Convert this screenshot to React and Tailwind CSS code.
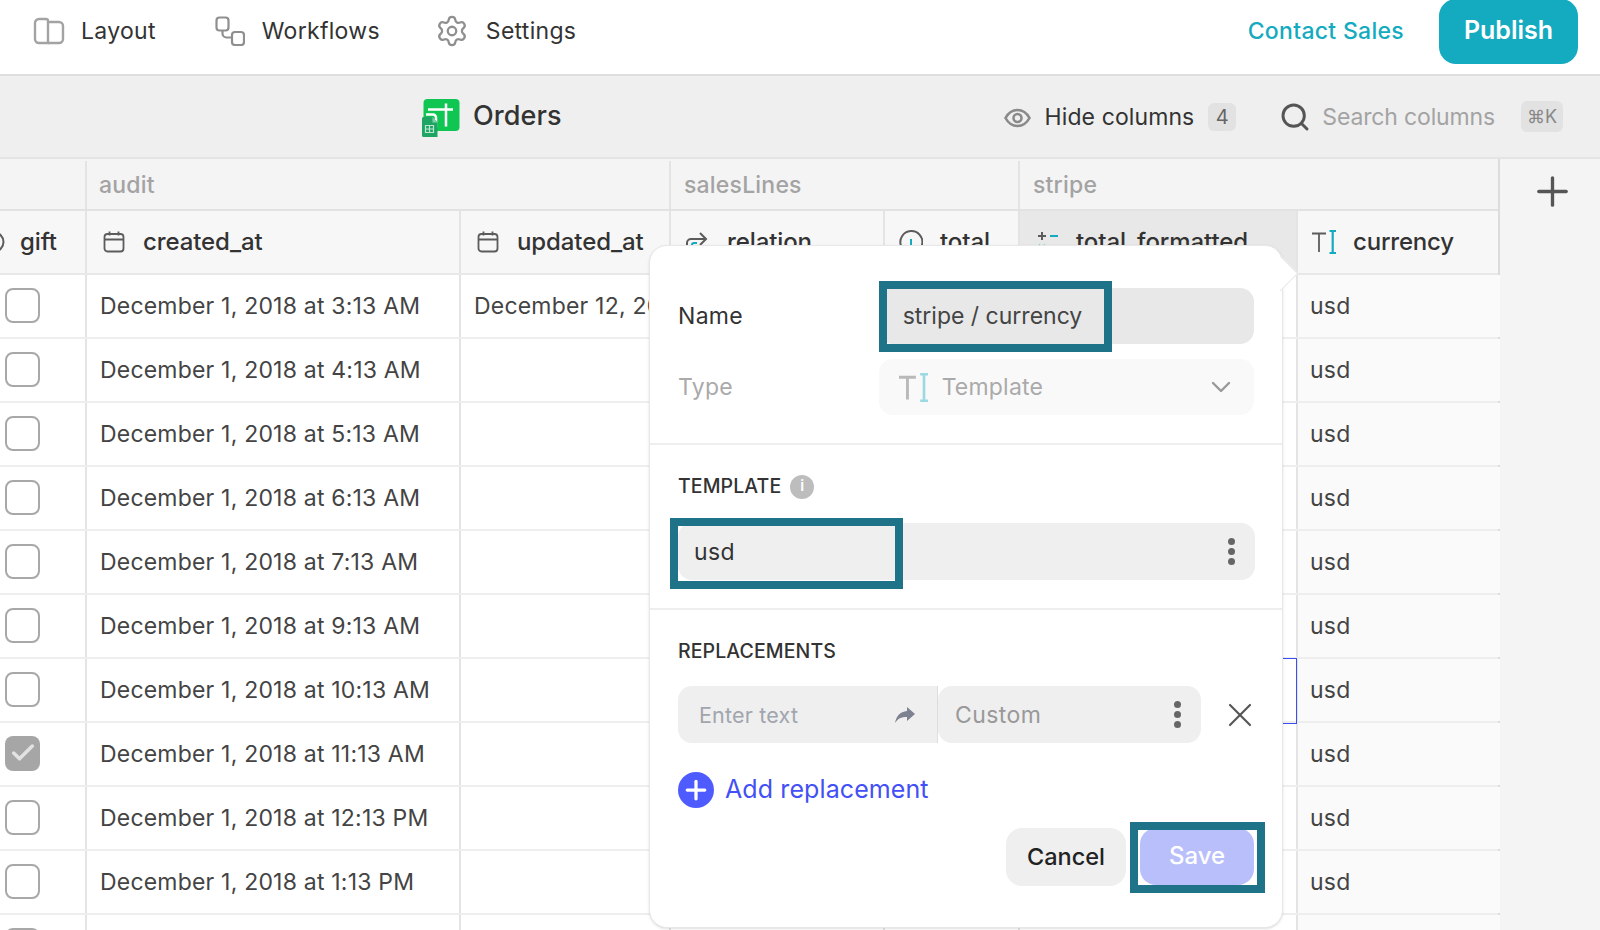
import { Settings, Search, Plus, X, ChevronDown, Check } from 'lucide-react';

const times = ['3:13 AM', '4:13 AM', '5:13 AM', '6:13 AM', '7:13 AM', '9:13 AM', '10:13 AM', '11:13 AM', '12:13 PM', '1:13 PM'];

const widths = {
  gift: 'w-[87px]',
  created: 'w-[374px]',
  updated: 'w-[210px]',
  relation: 'w-[214px]',
  total: 'w-[135px]',
  formatted: 'w-[278px]',
  currency: 'w-[202px]',
};

function LayoutIcon() {
  return (
    <svg width="32" height="28" viewBox="0 0 32 28" fill="none" stroke="#a3a3a3" strokeWidth="2.4">
      <path d="M6 2h7a2 2 0 0 1 2 2v22H6a4 4 0 0 1-4-4V6a4 4 0 0 1 4-4z" />
      <path d="M15 5h11a4 4 0 0 1 4 4v13a4 4 0 0 1-4 4H15" />
    </svg>
  );
}

function WorkflowIcon() {
  return (
    <svg width="30" height="30" viewBox="0 0 30 30" fill="none" stroke="#8f8f8f" strokeWidth="2.2">
      <rect x="1.500" y="1.500" width="12" height="13" rx="3" />
      <rect x="17" y="16" width="12" height="13" rx="3" />
      <path d="M7.500 14.500v3a4 4 0 0 0 4 4H17" />
    </svg>
  );
}

function OrdersIcon() {
  return (
    <svg className="mt-[3px]" width="38" height="38" viewBox="0 0 38 38">
      <rect x="1.500" y="0" width="36" height="32" rx="4" fill="#10c653" />
      <path d="M6 10.500h25M24 4.500v23" stroke="#fff" strokeWidth="2.500" fill="none" />
      <path d="M4 15.500h7a3 3 0 0 1 3 3v10" stroke="#fff" strokeWidth="2.500" fill="none" />
      <path d="M1.500 18h9l5 5.500V38h-14a1.500 1.500 0 0 1-1.500-1.500V19.500A1.500 1.500 0 0 1 1.500 18z" fill="#1fa463" />
      <path d="M10.500 18l5 5.500h-5z" fill="#7fd0a6" />
      <path d="M3.500 26.500h8v7h-8zM7.500 26.500v7M3.500 30h8" stroke="#b9e6cf" strokeWidth="1.200" fill="none" />
    </svg>
  );
}

function EyeIcon() {
  return (
    <svg className="ml-auto mt-[2px]" width="27" height="20" viewBox="0 0 27 20" fill="none" stroke="#8a8a8a" strokeWidth="2.600">
      <path d="M1.500 10C4.500 4.500 8.500 2 13.500 2s9 2.500 12 8c-3 5.500-7 8-12 8s-9-2.500-12-8z" />
      <circle cx="13.500" cy="10" r="4" />
    </svg>
  );
}

function CalendarIcon() {
  return (
    <svg width="22" height="22" viewBox="0 0 22 22" fill="none" stroke="#5c5c5c" strokeWidth="1.800">
      <rect x="1.500" y="3" width="19" height="17.500" rx="3" />
      <path d="M1.500 8.500h19M6.500 0.500v4M15.500 0.500v4" />
    </svg>
  );
}

function RelationIcon() {
  return (
    <svg width="24" height="24" viewBox="0 0 24 24" fill="none" stroke="#5c5c5c" strokeWidth="2">
      <path d="M2 23V13a4 4 0 0 1 4-4h15M15 3l6 6-6 6" />
      <path d="M7 23v-8a2 2 0 0 1 2-2h3" stroke="#14abc0" />
    </svg>
  );
}

function NumberIcon() {
  return (
    <svg width="24" height="24" viewBox="0 0 24 24" fill="none" stroke="#5c5c5c" strokeWidth="2">
      <path d="M9 22.500A11 11 0 1 1 17 22" />
      <path d="M12 9v9l-3 3" stroke="#14abc0" />
    </svg>
  );
}

function FormulaIcon() {
  return (
    <svg width="22" height="22" viewBox="0 0 22 22" fill="none" strokeWidth="2">
      <path d="M5 1v8M1 5h8" stroke="#5c5c5c" />
      <path d="M13 5h8" stroke="#14abc0" />
      <path d="M2 14l6 6M8 14l-6 6" stroke="#14abc0" />
      <path d="M13 17h8" stroke="#5c5c5c" />
    </svg>
  );
}

function BooleanIcon() {
  return (
    <svg width="5" height="22" viewBox="0 0 5 22" fill="none" stroke="#5c5c5c" strokeWidth="2">
      <circle cx="-6" cy="11" r="9.500" />
    </svg>
  );
}

function TextIcon({ size = 24, faded }) {
  return (
    <svg className={faded ? 'opacity-40' : ''} width={size} height={size} viewBox="0 0 24 24" fill="none" strokeWidth={faded ? 2.400 : 1.800}>
      <path d="M0 3.500h14M7 3.500V22" stroke="#5c5c5c" />
      <path d="M17.500 1h6.500M17.500 23h6.500M20.700 1v22" stroke="#14abc0" strokeWidth="2.200" />
    </svg>
  );
}

function Dots() {
  return (
    <span className="flex flex-col gap-[3px]">
      <span className="h-[7px] w-[7px] rounded-full bg-[#666]" />
      <span className="h-[7px] w-[7px] rounded-full bg-[#666]" />
      <span className="h-[7px] w-[7px] rounded-full bg-[#666]" />
    </span>
  );
}

function Highlight({ className }) {
  return <div className={`absolute border-[8px] border-[#1f7389] ${className}`} />;
}

function NavItem({ icon, label, className }) {
  return (
    <div className={`flex items-center ${className}`}>
      {icon}
      <span className="text-[23px] tracking-[0.3px] text-[#333]">{label}</span>
    </div>
  );
}

function HeadCell({ width, icon, label, className = '' }) {
  return (
    <div className={`flex h-full shrink-0 items-center border-r-2 border-[#e4e4e4] ${width} ${className}`}>
      {icon}
      <span className="text-[24px] font-medium tracking-[-0.1px] text-[#333]">{label}</span>
    </div>
  );
}

function Row({ time, checked, index }) {
  return (
    <div className="flex h-[64px] border-b-2 border-[#eeeeee] text-[23px] tracking-[0.2px] text-[#444]">
      <div className={`flex shrink-0 items-center border-r-2 border-[#e4e4e4] pb-[2px] pl-[5px] ${widths.gift}`}>
        {checked ? (
          <span className="flex h-[35px] w-[35px] items-center justify-center rounded-[8px] bg-[#a6a6a6]">
            <Check size={28} color="#e2e2e2" strokeWidth={3} />
          </span>
        ) : (
          <span className="h-[35px] w-[35px] rounded-[8px] border-2 border-[#a8a8a8] bg-white" />
        )}
      </div>
      <div className={`flex shrink-0 items-center border-r-2 border-[#e4e4e4] pl-[13px] ${widths.created}`}>
        {time ? `December 1, 2018 at ${time}` : ''}
      </div>
      <div className={`flex shrink-0 items-center overflow-hidden whitespace-nowrap border-r-2 border-[#e4e4e4] pl-[13px] ${widths.updated}`}>
        {index === 0 ? 'December 12, 20' : ''}
      </div>
      <div className={`shrink-0 border-r-2 border-[#e4e4e4] ${widths.relation}`} />
      <div className={`shrink-0 border-r-2 border-[#e4e4e4] ${widths.total}`} />
      <div className={`shrink-0 border-r-2 border-[#e4e4e4] ${widths.formatted}`} />
      <div className={`flex shrink-0 items-center bg-[#fafafa] pl-[12px] ${widths.currency}`}>{time ? 'usd' : ''}</div>
    </div>
  );
}

export default function App() {
  return (
    <div className="relative h-screen w-full overflow-hidden bg-white font-['Inter',sans-serif]">
      <header className="flex h-[76px] items-center border-b-2 border-[#dedede] pb-[12px] pl-[33px] pr-[22px]">
        <NavItem icon={<LayoutIcon />} label="Layout" className="gap-[16px]" />
        <NavItem icon={<WorkflowIcon />} label="Workflows" className="ml-[59px] gap-[17px]" />
        <NavItem icon={<Settings size={34} color="#8f8f8f" strokeWidth={1.600} />} label="Settings" className="ml-[55px] gap-[17px]" />
        <span className="ml-auto text-[23px] font-medium tracking-[0.3px] text-[#14abc0]">Contact Sales</span>
        <button className="ml-[35px] h-[65px] w-[139px] shrink-0 rounded-[17px] bg-[#14abc0] text-[25px] font-semibold text-white">
          Publish
        </button>
      </header>

      <div className="flex h-[83px] items-center border-b-2 border-[#e4e4e4] bg-[#efefef] pl-[422px] pr-[37px]">
        <OrdersIcon />
        <span className="ml-[13px] text-[27px] font-medium tracking-[0.1px] text-[#333]">Orders</span>
        <EyeIcon />
        <span className="ml-[14px] mt-[2px] text-[23px] tracking-[0.1px] text-[#333]">Hide columns</span>
        <span className="ml-[14px] flex h-[28px] w-[28px] items-center justify-center rounded-[6px] bg-[#e2e2e2] text-[20px] text-[#666]">4</span>
        <Search className="ml-[43px]" size={32} color="#555" strokeWidth={2.200} />
        <span className="ml-[11px] mt-[2px] text-[23px] tracking-[-0.15px] text-[#a3a3a3]">Search columns</span>
        <span className="ml-[26px] flex h-[31px] w-[42px] items-center justify-center rounded-[6px] bg-[#e2e2e2] text-[18px] text-[#888]">⌘K</span>
      </div>

      <div className="flex">
        <div className="w-[1500px] shrink-0 border-r-2 border-[#dcdcdc]">
          <div className="flex h-[52px] border-b-2 border-[#e2e2e2] bg-[#f4f4f4] pt-[2px] text-[23px] font-medium tracking-[0.2px] text-[#a3a3a3]">
            <div className={`shrink-0 border-r-2 border-[#e4e4e4] ${widths.gift}`} />
            <div className="flex w-[584px] shrink-0 items-center border-r-2 border-[#e4e4e4] pl-[12px]">audit</div>
            <div className="flex w-[349px] shrink-0 items-center border-r-2 border-[#e4e4e4] pl-[13px]">salesLines</div>
            <div className="flex flex-1 items-center pl-[13px]">stripe</div>
          </div>
          <div className="flex h-[64px] border-b-2 border-[#e8e8e8] bg-[#f7f7f7]">
            <HeadCell width={widths.gift} className="gap-[15px]" icon={<BooleanIcon />} label="gift" />
            <HeadCell width={widths.created} className="gap-[18px] pl-[16px]" icon={<CalendarIcon />} label="created_at" />
            <HeadCell width={widths.updated} className="gap-[18px] pl-[16px]" icon={<CalendarIcon />} label="updated_at" />
            <HeadCell width={widths.relation} className="gap-[18px] pl-[14px]" icon={<RelationIcon />} label="relation" />
            <HeadCell width={widths.total} className="gap-[17px] pl-[14px]" icon={<NumberIcon />} label="total" />
            <HeadCell width={widths.formatted} className="gap-[17px] bg-[#e8e8e8] pl-[17px]" icon={<FormulaIcon />} label="total_formatted" />
            <div className={`flex shrink-0 items-center gap-[17px] pl-[14px] ${widths.currency}`}>
              <TextIcon />
              <span className="text-[24px] font-medium tracking-[-0.2px] text-[#333]">currency</span>
            </div>
          </div>
          {times.map((time, i) => (
            <Row key={time} time={time} index={i} checked={i === 7} />
          ))}
          <Row index={10} />
        </div>
        <div className="flex flex-1 justify-center bg-[#f4f4f4] pl-[5px] pt-[9px]">
          <Plus className="shrink-0" size={47} color="#555" strokeWidth={1.700} />
        </div>
      </div>

      {/* selected cell, mostly behind the popover */}
      <div className="absolute left-[1200px] top-[658px] h-[66px] w-[97px] border border-[#3b4ef0]" />

      <div className="absolute left-[649px] top-[245px] h-[683px] w-[634px] rounded-[18px] border border-[#e8e8e8] bg-white shadow-sm">
        <div className="absolute left-[618px] top-[15px] h-[25px] w-[25px] rotate-45 border-r border-t border-[#e8e8e8] bg-white" />

        <div className="relative flex h-[199px] flex-col gap-[15px] border-b-2 border-[#eeeeee] px-[28px] pt-[42px]">
          <div className="flex items-center">
            <span className="w-[201px] text-[23px] tracking-[0.3px] text-[#333]">Name</span>
            <div className="flex h-[56px] w-[376px] items-center rounded-[14px] bg-[#e8e8e8] pl-[24px] text-[23px] text-[#444]">
              stripe / currency
            </div>
          </div>
          <div className="flex items-center">
            <span className="w-[201px] text-[23px] tracking-[0.3px] text-[#aaa]">Type</span>
            <div className="flex h-[56px] w-[376px] items-center rounded-[14px] bg-[#f9f9f9] pl-[20px] pr-[17px] text-[23px] tracking-[0.2px] text-[#aaa]">
              <TextIcon size={29} faded />
              <span className="ml-[14px]">Template</span>
              <ChevronDown className="ml-auto" size={32} color="#999" strokeWidth={1.800} />
            </div>
          </div>
          <Highlight className="left-[229px] top-[35px] h-[71px] w-[233px]" />
        </div>

        <div className="relative flex h-[165px] flex-col border-b-2 border-[#eeeeee] px-[28px] pt-[27px]">
          <div className="flex items-center gap-[9px]">
            <span className="text-[19.500px] font-medium tracking-[0.1px] text-[#333]">TEMPLATE</span>
            <span className="flex h-[24px] w-[24px] items-center justify-center rounded-full bg-[#bdbdbd] text-[15px] font-semibold text-white">i</span>
          </div>
          <div className="mt-[22px] flex h-[57px] w-[577px] items-center justify-between rounded-[14px] bg-[#efefef] pl-[16px] pr-[20px] text-[23px] tracking-[0.4px] text-[#333]">
            usd
            <Dots />
          </div>
          <Highlight className="left-[20px] top-[73px] h-[71px] w-[233px]" />
        </div>

        <div className="relative flex flex-col px-[28px] pt-[27px]">
          <span className="text-[19.500px] font-medium tracking-[0.1px] text-[#333]">REPLACEMENTS</span>
          <div className="mt-[20px] flex items-center">
            <div className="flex h-[57px] w-[260px] shrink-0 items-center justify-between rounded-l-[14px] border-r border-[#dddddd] bg-[#efefef] pl-[21px] pr-[22px] text-[21.500px] tracking-[0.2px] text-[#a1a5ad]">
              Enter text
              <svg width="20" height="16" viewBox="0 0 20 16" fill="#7d8190">
                <path d="M12 0l8 7-8 7v-4C6 10 3 11.500 0 16 1 9.500 5 4.500 12 4z" />
              </svg>
            </div>
            <div className="flex h-[57px] w-[263px] shrink-0 items-center justify-between rounded-[14px] bg-[#efefef] pl-[17px] pr-[20px] text-[23px] tracking-[0.4px] text-[#999]">
              Custom
              <Dots />
            </div>
            <X className="ml-[19px] shrink-0" size={40} color="#555" strokeWidth={1.300} />
          </div>
          <div className="mt-[27px] flex items-center gap-[11px]">
            <span className="flex h-[36px] w-[36px] items-center justify-center rounded-full bg-[#4d5bff]">
              <Plus size={30} color="#fff" strokeWidth={2.600} />
            </span>
            <span className="mt-px text-[25px] tracking-[0.1px] text-[#4350f5]">Add replacement</span>
          </div>
          <div className="mt-[19px] flex justify-end gap-[14px]">
            <button className="h-[58px] w-[120px] rounded-[16px] bg-[#efefef] text-[23.500px] font-medium text-[#222]">Cancel</button>
            <button className="h-[57px] w-[114px] rounded-[16px] bg-[#b9bffb] text-[24px] font-medium text-white">Save</button>
          </div>
          <Highlight className="left-[480px] top-[212px] h-[71px] w-[135px]" />
        </div>
      </div>
    </div>
  );
}
